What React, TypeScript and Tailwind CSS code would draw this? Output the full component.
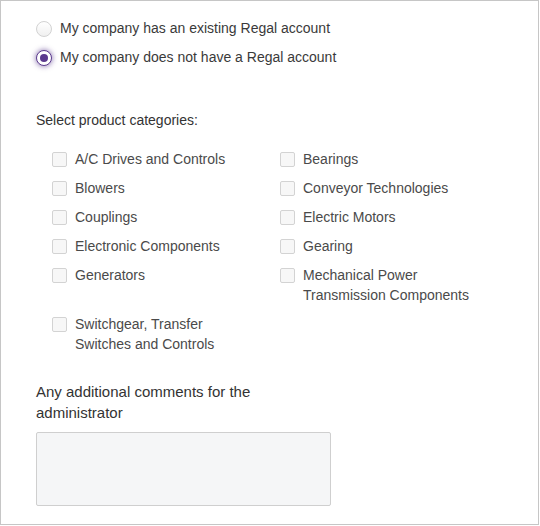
import { useState } from "react";

const CATEGORIES = [
  "A/C Drives and Controls",
  "Bearings",
  "Blowers",
  "Conveyor Technologies",
  "Couplings",
  "Electric Motors",
  "Electronic Components",
  "Gearing",
  "Generators",
  "Mechanical Power Transmission Components",
  "Switchgear, Transfer Switches and Controls",
];

function Radio({ checked, label, onSelect }: { checked: boolean; label: string; onSelect: () => void }) {
  return (
    <label className="flex h-[29px] cursor-pointer items-center gap-2" onClick={onSelect}>
      {checked ? (
        <span className="flex h-4 w-4 items-center justify-center rounded-full border border-[#5b3a8e] bg-white shadow-[0_0_5px_1px_rgba(91,58,142,0.55)]">
          <span className="h-2 w-2 rounded-full bg-[#5b3a8e]" />
        </span>
      ) : (
        <span className="h-4 w-4 rounded-full border border-[#d2d2d2] bg-gradient-to-b from-white to-[#f0f0f0]" />
      )}
      <span className="text-[14px] text-[#3a3a3a]">{label}</span>
    </label>
  );
}

export default function App() {
  const [hasAccount, setHasAccount] = useState(false);
  const [picked, setPicked] = useState<Record<string, boolean>>({});

  return (
    <div
      className="h-[525px] w-[539px] border border-[#c6c6c6] bg-white pl-[35px] pt-[13px]"
      style={{ fontFamily: '"Liberation Sans", Arial, sans-serif' }}
    >
      {/* Account choice */}
      <Radio checked={hasAccount} label="My company has an existing Regal account" onSelect={() => setHasAccount(true)} />
      <Radio checked={!hasAccount} label="My company does not have a Regal account" onSelect={() => setHasAccount(false)} />

      <p className="mt-[38px] text-[14px] leading-5 text-[#333]">Select product categories:</p>

      {/* Categories */}
      <div className="mt-[19px] grid w-[460px] grid-cols-[228px_228px] gap-y-[9px] pl-4">
        {CATEGORIES.map((c) => (
          <label
            key={c}
            className="flex cursor-pointer items-start gap-2"
            onClick={() => setPicked((p) => ({ ...p, [c]: !p[c] }))}
          >
            <span
              className={`mt-[3px] h-[15px] w-[15px] shrink-0 rounded-[2px] border border-[#d3d3d3] ${
                picked[c] ? "bg-[#5b3a8e]" : "bg-[#f7f7f7]"
              }`}
            />
            <span className="w-[180px] text-[14px] leading-5 text-[#4a4a4a]">{c}</span>
          </label>
        ))}
      </div>

      {/* Comments */}
      <label className="mt-[27px] block w-[294px] text-[15px] leading-[21px] text-[#333]">
        Any additional comments for the administrator
      </label>
      <textarea className="mt-[9px] block h-[74px] w-[295px] resize-none rounded-[2px] border border-[#cfcfcf] bg-[#f5f6f7] outline-none" />
    </div>
  );
}
